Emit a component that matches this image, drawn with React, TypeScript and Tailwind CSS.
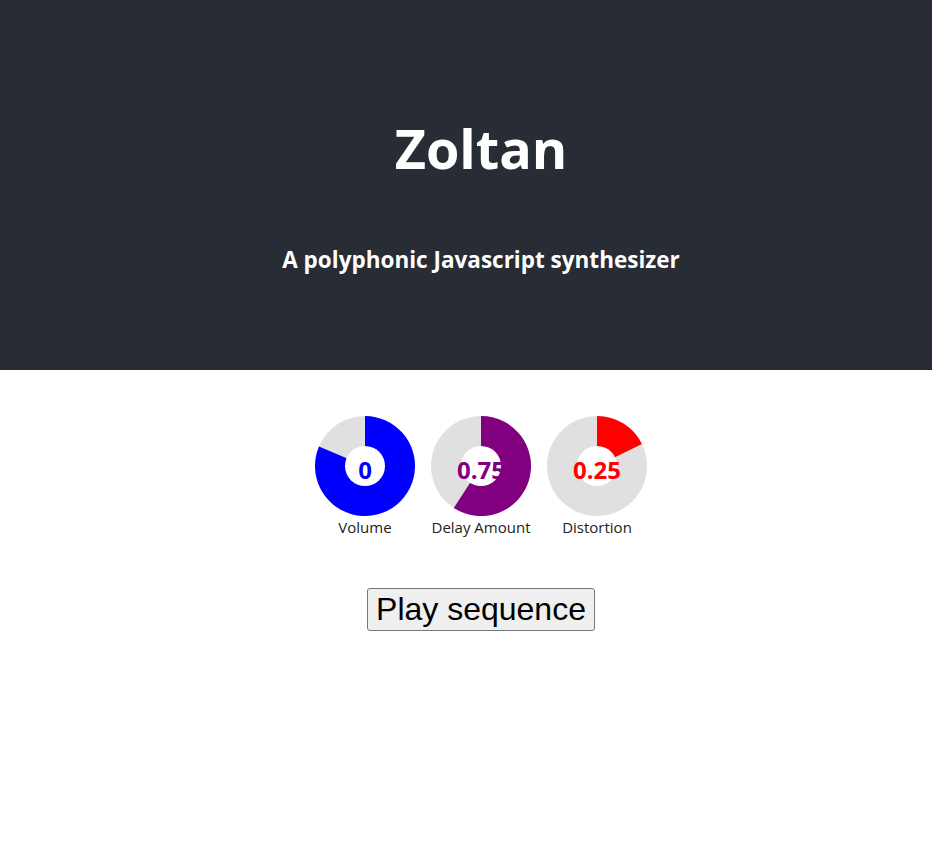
import React from "react";

type Knob = { label: string; value: string; color: string; sweep: number };

const knobs: Knob[] = [
  { label: "Volume", value: "0", color: "#0000ff", sweep: 293 },
  { label: "Delay Amount", value: "0.75", color: "#800080", sweep: 213 },
  { label: "Distortion", value: "0.25", color: "#ff0000", sweep: 64 },
];

const arcPath = (deg: number) => {
  const rad = (deg * Math.PI) / 180;
  const x = 50 + 50 * Math.sin(rad);
  const y = 50 - 50 * Math.cos(rad);
  const large = deg > 180 ? 1 : 0;
  return `M50 50 L50 0 A50 50 0 ${large} 1 ${x.toFixed(2)} ${y.toFixed(2)} Z`;
};

const KnobDial: React.FC<{ knob: Knob }> = ({ knob }) => (
  <div className="flex w-[100px] flex-col items-center">
    <div className="relative h-[100px] w-[100px]">
      <svg viewBox="0 0 100 100" className="h-full w-full">
        <circle cx="50" cy="50" r="50" fill="#e0e0e0" />
        <path d={arcPath(knob.sweep)} fill={knob.color} />
        <circle cx="50" cy="50" r="20" fill="#ffffff" />
      </svg>
      <span
        className="absolute inset-0 flex items-center justify-center pt-[7px] text-[24px] font-bold leading-none"
        style={{ color: knob.color }}
      >
        {knob.value}
      </span>
    </div>
    <span className="mt-[1px] whitespace-nowrap text-[15px] leading-[21px] text-[#222]">
      {knob.label}
    </span>
  </div>
);

export default function App() {
  return (
    <div className="min-h-screen bg-white font-['Open_Sans',sans-serif]">
      {/* Header */}
      <header className="flex h-[370px] flex-col items-center bg-[#282c34] pl-[30px] pt-[121px] text-white">
        <h1 className="text-[54px] font-bold leading-none">Zoltan</h1>
        <h3 className="mt-[74px] text-[22.5px] font-bold leading-none">
          A polyphonic Javascript synthesizer
        </h3>
      </header>

      {/* Controls */}
      <main className="flex flex-col items-center pl-[30px]">
        <div className="mt-[46px] flex gap-4">
          {knobs.map((k) => (
            <KnobDial key={k.label} knob={k} />
          ))}
        </div>
        <button className="mt-[50px] rounded-[3px] border border-[#767676] bg-[#efefef] px-[8px] py-[2px] font-['Liberation_Sans',Arial,sans-serif] text-[32px] leading-[normal] text-black">
          Play sequence
        </button>
      </main>
    </div>
  );
}
